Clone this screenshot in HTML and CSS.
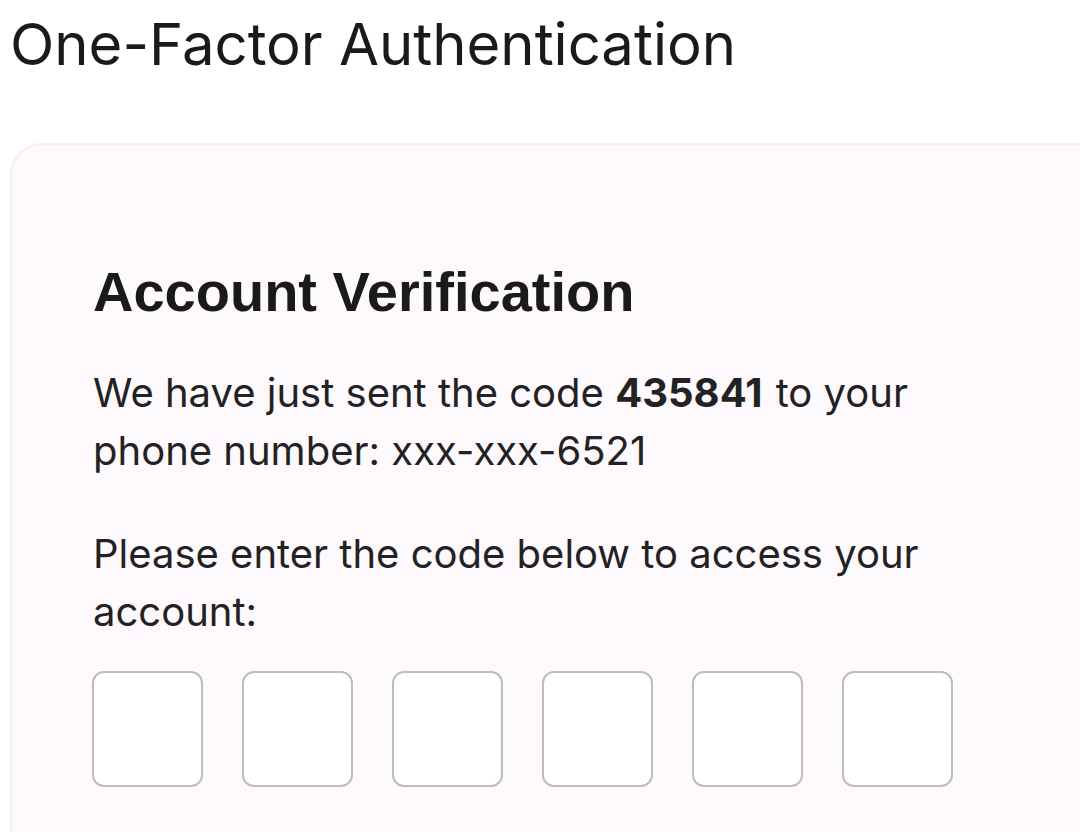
FILE: index.html
```html
<!DOCTYPE html>
<html lang="en">
<head>
    <meta charset="UTF-8">
    <meta name="viewport" content="width=device-width, initial-scale=1.0">
    <title>One-Factor Authentication</title>
    <link rel="stylesheet" href="styles.css">
</head>
<body>

    <div class="page-title">One-Factor Authentication</div>

    <div class="card">
        <h1>Account Verification</h1>
        <p>We have just sent the code <b>435841</b> to your phone number: xxx-xxx-6521</p>
        <p class="second">Please enter the code below to access your account:</p>

        <div class="code-boxes">
            <input class="code-box" type="text" maxlength="1">
            <input class="code-box" type="text" maxlength="1">
            <input class="code-box" type="text" maxlength="1">
            <input class="code-box" type="text" maxlength="1">
            <input class="code-box" type="text" maxlength="1">
            <input class="code-box" type="text" maxlength="1">
        </div>
    </div>

</body>
</html>
```

FILE: styles.css
```css
body {
    font-family: "Liberation Sans", Arial, sans-serif;
    margin: 0;
    padding: 0;
    background-color: #ffffff;
    color: #1f1f1f;
    height: 832px;
    overflow: hidden;
}

.page-title {
    font-family: Inter, "Liberation Sans", sans-serif;
    font-size: 58px;
    font-weight: 400;
    color: #1a1a1a;
    padding: 9px 0 0 10px;
    height: 143px;
    box-sizing: border-box;
}

.card {
    margin-left: 10px;
    background-color: #fdf9fd;
    border-top: 2px solid #f3eff3;
    border-left: 2px solid #f3eff3;
    border-radius: 32px 0 0 0;
    padding: 115px 0 0 81px;
    height: 700px;
    box-sizing: border-box;
}

.card h1 {
    font-size: 56px;
    line-height: 64px;
    font-weight: bold;
    margin: 0 0 40px 0;
    color: #1a1a1a;
}

.card p {
    font-family: Inter, "Liberation Sans", sans-serif;
    font-size: 40px;
    line-height: 58px;
    margin: 0;
    width: 880px;
    color: #222;
}

.card p b {
    font-weight: 700;
    margin-right: 2px;
}

.card p.second {
    margin-top: 45px;
}

.code-boxes {
    display: flex;
    gap: 39px;
    margin-top: 30px;
    margin-left: -1px;
}

.code-box {
    width: 111px;
    height: 116px;
    box-sizing: border-box;
    border: 2px solid #bdbdbd;
    border-radius: 12px;
    background-color: #fff;
    margin: 0;
    padding: 0;
}
```
